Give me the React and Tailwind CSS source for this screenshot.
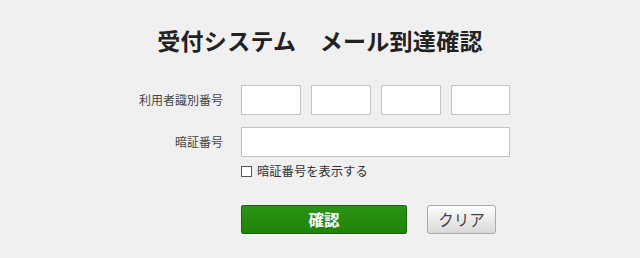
export default function App() {
  const font = { fontFamily: '"Noto Sans CJK JP", "Noto Sans", sans-serif' };
  return (
    <div className="w-[640px] h-[258px] bg-[#f0f0f0] text-[#333]" style={font}>
      <h1 className="pt-[25px] text-center text-[23px] leading-[30px] font-bold text-[#222] tracking-[0.3px]">
        受付システム　メール到達確認
      </h1>

      <div className="ml-[100px] mt-[30px] grid grid-cols-[123px_269px] gap-x-[18px]">
        <label className="flex items-center justify-end h-[30px] text-[12px] text-[#444]">
          利用者識別番号
        </label>
        <div className="flex gap-[10px]">
          <input className="w-[60px] h-[30px] bg-white border border-[#c4c4c4]" />
          <input className="w-[60px] h-[30px] bg-white border border-[#c4c4c4]" />
          <input className="w-[60px] h-[30px] bg-white border border-[#c4c4c4]" />
          <input className="w-[59px] h-[30px] bg-white border border-[#c4c4c4]" />
        </div>

        <label className="mt-[12px] flex items-center justify-end h-[30px] text-[12px] text-[#444]">
          暗証番号
        </label>
        <input className="mt-[12px] w-[269px] h-[30px] bg-white border border-[#c4c4c4]" />

        <div />
        <label className="mt-[6px] flex items-center gap-[5px] h-[16px] text-[12.3px] text-[#333]">
          <span className="w-[11px] h-[11px] border border-[#555] bg-white"></span>
          暗証番号を表示する
        </label>

        <div />
        <div className="mt-[26px] flex items-center gap-[20px]">
          <button className="w-[166px] h-[29px] rounded-[2px] border border-[#1b650c] bg-gradient-to-b from-[#2b9414] to-[#208409] text-white text-[15.5px] font-bold leading-none">
            確認
          </button>
          <button className="w-[69px] h-[29px] rounded-[3px] border border-[#a9a9a9] bg-gradient-to-b from-[#fdfdfd] to-[#d9d9d9] text-[#444] text-[15.5px] leading-none">
            クリア
          </button>
        </div>
      </div>
    </div>
  );
}
